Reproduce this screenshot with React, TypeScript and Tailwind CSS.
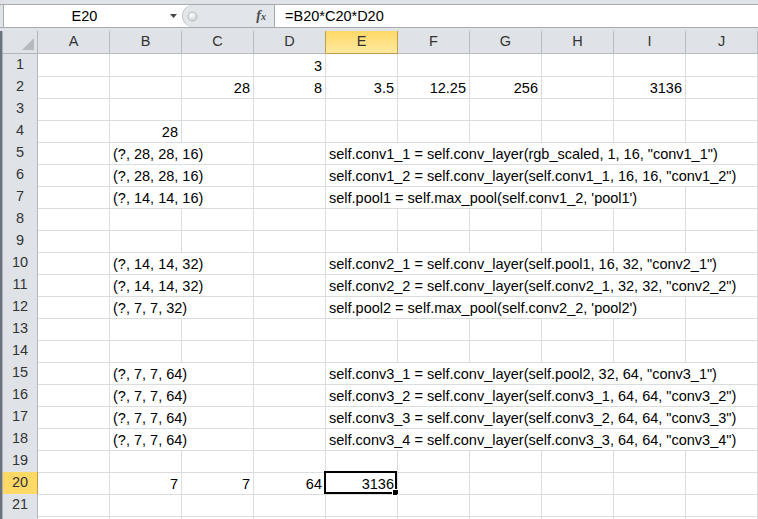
import React from "react";

// Excel 2010 style sheet: 10 columns, 22 rows
const COLS = ["A", "B", "C", "D", "E", "F", "G", "H", "I", "J"];

type Cell = { c: number; t: string; r?: boolean; span?: number };

const DATA: Record<number, Cell[]> = {
  1: [{ c: 3, t: "3", r: true }],
  2: [
    { c: 2, t: "28", r: true },
    { c: 3, t: "8", r: true },
    { c: 4, t: "3.5", r: true },
    { c: 5, t: "12.25", r: true },
    { c: 6, t: "256", r: true },
    { c: 8, t: "3136", r: true },
  ],
  4: [{ c: 1, t: "28", r: true }],
  5: [
    { c: 1, t: "(?, 28, 28, 16)", span: 2 },
    { c: 4, t: 'self.conv1_1 = self.conv_layer(rgb_scaled, 1, 16, "conv1_1")', span: 6 },
  ],
  6: [
    { c: 1, t: "(?, 28, 28, 16)", span: 2 },
    { c: 4, t: 'self.conv1_2 = self.conv_layer(self.conv1_1, 16, 16, "conv1_2")', span: 6 },
  ],
  7: [
    { c: 1, t: "(?, 14, 14, 16)", span: 2 },
    { c: 4, t: "self.pool1 = self.max_pool(self.conv1_2, 'pool1')", span: 5 },
  ],
  10: [
    { c: 1, t: "(?, 14, 14, 32)", span: 2 },
    { c: 4, t: 'self.conv2_1 = self.conv_layer(self.pool1, 16, 32, "conv2_1")', span: 6 },
  ],
  11: [
    { c: 1, t: "(?, 14, 14, 32)", span: 2 },
    { c: 4, t: 'self.conv2_2 = self.conv_layer(self.conv2_1, 32, 32, "conv2_2")', span: 6 },
  ],
  12: [
    { c: 1, t: "(?, 7, 7, 32)", span: 2 },
    { c: 4, t: "self.pool2 = self.max_pool(self.conv2_2, 'pool2')", span: 5 },
  ],
  15: [
    { c: 1, t: "(?, 7, 7, 64)", span: 2 },
    { c: 4, t: 'self.conv3_1 = self.conv_layer(self.pool2, 32, 64, "conv3_1")', span: 6 },
  ],
  16: [
    { c: 1, t: "(?, 7, 7, 64)", span: 2 },
    { c: 4, t: 'self.conv3_2 = self.conv_layer(self.conv3_1, 64, 64, "conv3_2")', span: 6 },
  ],
  17: [
    { c: 1, t: "(?, 7, 7, 64)", span: 2 },
    { c: 4, t: 'self.conv3_3 = self.conv_layer(self.conv3_2, 64, 64, "conv3_3")', span: 6 },
  ],
  18: [
    { c: 1, t: "(?, 7, 7, 64)", span: 2 },
    { c: 4, t: 'self.conv3_4 = self.conv_layer(self.conv3_3, 64, 64, "conv3_4")', span: 6 },
  ],
  20: [
    { c: 1, t: "7", r: true },
    { c: 2, t: "7", r: true },
    { c: 3, t: "64", r: true },
    { c: 4, t: "3136", r: true },
  ],
};

const SPAN: Record<number, string> = {
  1: "col-span-1",
  2: "col-span-2",
  5: "col-span-5",
  6: "col-span-6",
};

function segments(cells: Cell[]) {
  const out: Cell[] = [];
  let c = 0;
  while (c < 10) {
    const cell = cells.find((x) => x.c === c);
    if (cell) {
      out.push(cell);
      c += cell.span ?? 1;
    } else {
      out.push({ c, t: "" });
      c++;
    }
  }
  return out;
}

const GRID = "grid grid-cols-[3px_35px_repeat(10,72px)]";

function Strip() {
  return <div className="border-l-2 border-[#6b727b] bg-[#aab1b9]" />;
}

export default function App() {
  const rows = Array.from({ length: 22 }, (_, i) => i + 1);

  return (
    <div className="w-[758px] h-[519px] overflow-hidden bg-white font-['Liberation_Sans',Arial,sans-serif] text-[14.5px] text-black">
      {/* formula bar */}
      <div className="h-[4px] bg-[#dfe3e8]" />
      <div className="flex h-[24px] border-y border-[#a7abb0] bg-white">
        <div className="w-[4px] border-r border-[#a7abb0] bg-[#dfe3e8]" />
        <div className="flex w-[178px] items-center">
          <div className="flex-1 text-center leading-none">E20</div>
          <div className="flex w-[17px] justify-center">
            <svg width="7" height="4" viewBox="0 0 7 4">
              <path d="M0 0h7L3.5 4z" fill="#444" />
            </svg>
          </div>
        </div>
        <div className="flex w-[93px] items-center rounded-l-[12px] border-r border-[#a7abb0] bg-[#e2e5e9] pl-[5px] pr-[8px] shadow-[inset_1px_0_0_#c4c8cd]">
          <svg width="11" height="11" viewBox="0 0 11 11">
            <defs>
              <radialGradient id="knob" cx="40%" cy="35%" r="70%">
                <stop offset="0" stopColor="#ffffff" />
                <stop offset="1" stopColor="#c9cdd2" />
              </radialGradient>
            </defs>
            <circle cx="5.5" cy="5.5" r="4.5" fill="url(#knob)" stroke="#b8bcc1" />
          </svg>
          <div className="flex-1" />
          <span className="font-['Liberation_Serif',serif] text-[14px] font-bold italic leading-none text-[#4a4a4a]">
            f<span className="text-[10px]">x</span>
          </span>
        </div>
        <div className="flex flex-1 items-center pl-[10px] leading-none">=B20*C20*D20</div>
      </div>
      <div className="h-[3px] bg-[#dfe3e8]" />

      {/* column headers */}
      <div className={GRID + " h-[23px]"}>
        <Strip />
        <div className="relative border-r border-b border-[#b1b6bb] bg-[#dfe3e8]">
          <svg className="absolute right-[3px] bottom-[3px]" width="12" height="12" viewBox="0 0 12 12">
            <path d="M12 0V12H0z" fill="#b5bac0" />
          </svg>
        </div>
        {COLS.map((h, i) => (
          <div
            key={h}
            className={
              "flex items-center justify-center border-b border-r text-[#333] " +
              (i === 4
                ? "border-[#c39c47] bg-gradient-to-b from-[#ffd966] to-[#feea9f]"
                : i === 3
                ? "border-b-[#b1b6bb] border-r-[#c39c47] bg-[#dfe3e8]"
                : "border-[#b8bdc2] bg-[#dfe3e8]")
            }
          >
            {h}
          </div>
        ))}
      </div>

      {/* rows */}
      {rows.map((n) => {
        const sel = n === 20;
        return (
          <div key={n} className={GRID + " h-[22px]"}>
            <Strip />
            <div
              className={
                "flex items-center justify-center border-r border-b text-[#333] " +
                (sel
                  ? "border-[#c39c47] bg-[#ffd966]"
                  : n === 19
                  ? "border-r-[#b1b6bb] border-b-[#c39c47] bg-[#dfe3e8]"
                  : "border-r-[#b1b6bb] border-b-[#c9cdd2] bg-[#dfe3e8]")
              }
            >
              {n < 22 ? n : ""}
            </div>
            {segments(DATA[n] ?? []).map((cell) => (
              <div
                key={cell.c}
                className={
                  "relative flex items-end border-r border-b border-[#dadcdd] pb-[1px] leading-[17px] " +
                  SPAN[cell.span ?? 1] +
                  (cell.r ? " justify-end pr-[3px]" : " pl-[3px]")
                }
              >
                <span className="whitespace-nowrap">{cell.t}</span>
                {sel && cell.c === 4 && (
                  <div className="absolute -left-[2px] -top-[1px] h-[23px] w-[73px] border-2 border-black">
                    <div className="absolute -right-[4px] -bottom-[4px] h-[7px] w-[7px] border border-white bg-black" />
                  </div>
                )}
              </div>
            ))}
          </div>
        );
      })}
    </div>
  );
}
